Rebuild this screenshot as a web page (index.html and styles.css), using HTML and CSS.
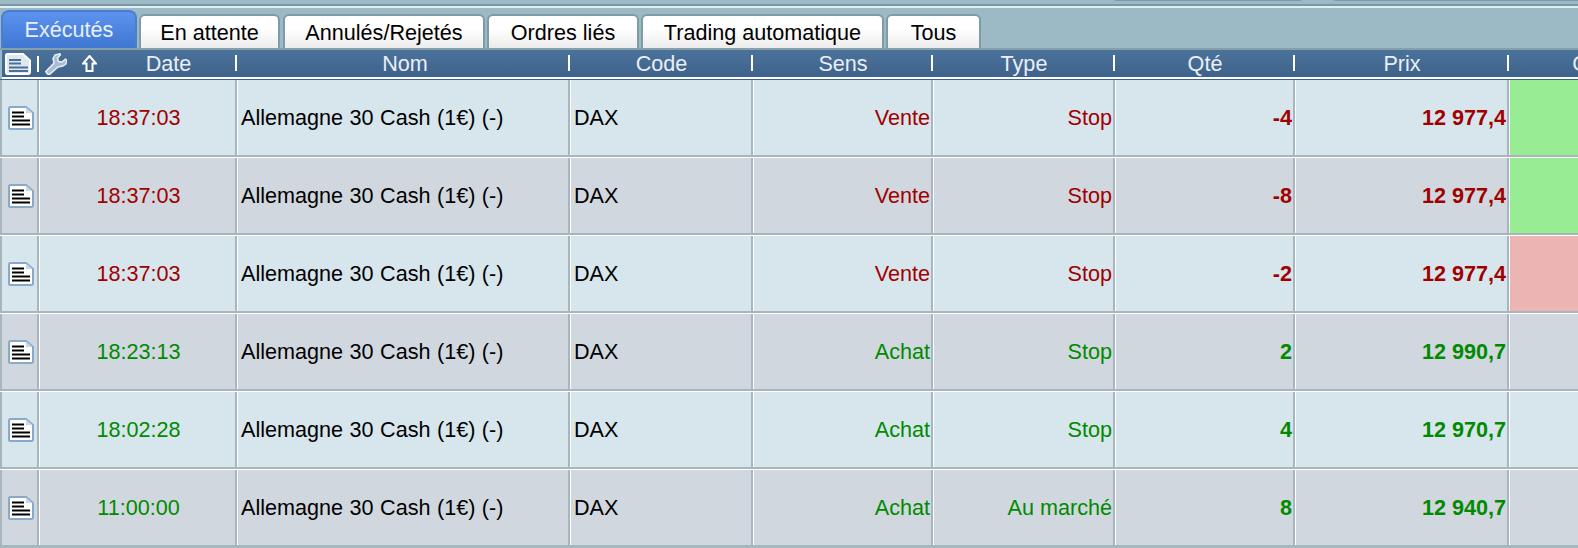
FILE: index.html
```html
<!DOCTYPE html>
<html lang="fr">
<head>
<meta charset="utf-8">
<title>Ordres</title>
<link rel="stylesheet" href="styles.css">
</head>
<body>
<div class="topstrip"><i class="edge edge-a"></i><i class="edge edge-b"></i></div>
<nav class="tabs">
  <span class="tab tab-active tab-w0">Exécutés</span>
  <span class="tab tab-w1">En attente</span>
  <span class="tab tab-w2">Annulés/Rejetés</span>
  <span class="tab tab-w3">Ordres liés</span>
  <span class="tab tab-w4">Trading automatique</span>
  <span class="tab tab-w5">Tous</span>
</nav>
<div class="thead">
  <div class="th th-icons">
    <svg class="ico-doc" width="26" height="22" viewBox="0 0 26 22"><path d="M2.500 1H18l7 6.500V19a2 2 0 0 1-2 2H2.500a1.500 1.500 0 0 1-1.500-1.500v-17A1.500 1.500 0 0 1 2.500 1z" fill="#dfe7f0" stroke="#fff" stroke-width="2"/><path d="M4 7h12M4 10.500h12M4 14.500h19M4 18h19" stroke="#4a6f99" stroke-width="2"/></svg>
    <i class="sep"></i>
    <svg class="ico-wrench" width="22" height="22" viewBox="0 0 22 22"><path d="M2.500 21 L.8 18.500 L9 10 L8 5.500 L10 2 L15 .8 L15.500 1.800 L12.500 5 L13.500 8.500 L17 9 L20.500 6 L21.500 7 L21 11 L18 13 L13 14 L4.500 21.500 Z" fill="#a9bdd2" stroke="#e8eef5" stroke-width="1.500" stroke-linejoin="round"/></svg>
    <svg class="ico-up" width="15" height="17" viewBox="0 0 15 17"><path d="M7.500 1 L14 8.500 H10.500 V16 H4.500 V8.500 H1 Z" fill="none" stroke="#fff" stroke-width="2"/></svg>
  </div>
  <div class="th c1">Date<i class="sep sep-end"></i></div>
  <div class="th c2 th-nom">Nom<i class="sep sep-end"></i></div>
  <div class="th c3">Code<i class="sep sep-end"></i></div>
  <div class="th c4">Sens<i class="sep sep-end"></i></div>
  <div class="th c5">Type<i class="sep sep-end"></i></div>
  <div class="th c6">Qté<i class="sep sep-end"></i></div>
  <div class="th c7">Prix<i class="sep sep-end"></i></div>
  <div class="th c8">Gain</div>
</div>
<div class="tbody">
  <div class="row odd sell">
    <div class="td c0"><svg class="ico-row" width="26" height="24" viewBox="0 0 26 24"><use href="#rowdoc"/></svg></div>
    <div class="td c1 center">18:37:03</div><div class="td c2 name">Allemagne 30 Cash (1€) (-)</div><div class="td c3 name">DAX</div><div class="td c4 right">Vente</div><div class="td c5 right">Stop</div><div class="td c6 right bold">-4</div><div class="td c7 right bold">12 977,4</div><div class="td c8 gain-green"></div>
  </div>
  <div class="row even sell">
    <div class="td c0"><svg class="ico-row" width="26" height="24" viewBox="0 0 26 24"><use href="#rowdoc"/></svg></div>
    <div class="td c1 center">18:37:03</div><div class="td c2 name">Allemagne 30 Cash (1€) (-)</div><div class="td c3 name">DAX</div><div class="td c4 right">Vente</div><div class="td c5 right">Stop</div><div class="td c6 right bold">-8</div><div class="td c7 right bold">12 977,4</div><div class="td c8 gain-green"></div>
  </div>
  <div class="row odd sell">
    <div class="td c0"><svg class="ico-row" width="26" height="24" viewBox="0 0 26 24"><use href="#rowdoc"/></svg></div>
    <div class="td c1 center">18:37:03</div><div class="td c2 name">Allemagne 30 Cash (1€) (-)</div><div class="td c3 name">DAX</div><div class="td c4 right">Vente</div><div class="td c5 right">Stop</div><div class="td c6 right bold">-2</div><div class="td c7 right bold">12 977,4</div><div class="td c8 gain-red"></div>
  </div>
  <div class="row even buy">
    <div class="td c0"><svg class="ico-row" width="26" height="24" viewBox="0 0 26 24"><use href="#rowdoc"/></svg></div>
    <div class="td c1 center">18:23:13</div><div class="td c2 name">Allemagne 30 Cash (1€) (-)</div><div class="td c3 name">DAX</div><div class="td c4 right">Achat</div><div class="td c5 right">Stop</div><div class="td c6 right bold">2</div><div class="td c7 right bold">12 990,7</div><div class="td c8"></div>
  </div>
  <div class="row odd buy">
    <div class="td c0"><svg class="ico-row" width="26" height="24" viewBox="0 0 26 24"><use href="#rowdoc"/></svg></div>
    <div class="td c1 center">18:02:28</div><div class="td c2 name">Allemagne 30 Cash (1€) (-)</div><div class="td c3 name">DAX</div><div class="td c4 right">Achat</div><div class="td c5 right">Stop</div><div class="td c6 right bold">4</div><div class="td c7 right bold">12 970,7</div><div class="td c8"></div>
  </div>
  <div class="row even buy">
    <div class="td c0"><svg class="ico-row" width="26" height="24" viewBox="0 0 26 24"><use href="#rowdoc"/></svg></div>
    <div class="td c1 center">11:00:00</div><div class="td c2 name">Allemagne 30 Cash (1€) (-)</div><div class="td c3 name">DAX</div><div class="td c4 right">Achat</div><div class="td c5 right">Au marché</div><div class="td c6 right bold">8</div><div class="td c7 right bold">12 940,7</div><div class="td c8"></div>
  </div>
</div>
<svg class="defs" width="0" height="0"><defs><g id="rowdoc"><path d="M2.500 1H18l7 6v14.500a1.500 1.500 0 0 1-1.500 1.500H2.500A1.500 1.500 0 0 1 1 21.500v-19A1.500 1.500 0 0 1 2.500 1z" fill="#fff" stroke="#8aa8c8" stroke-width="2"/><path d="M18 1.500V7h6.500z" fill="#c9d8ea"/><path d="M4 6.500h12M4 10.500h12M4 14.500h18M4 18.500h18" stroke="#000" stroke-width="2"/></g></defs></svg>
</body>
</html>
```

FILE: styles.css
```css
* { box-sizing: border-box; }
html, body { margin: 0; padding: 0; }
body {
  width: 1578px;
  height: 548px;
  overflow: hidden;
  background: #9bbac6;
  font-family: "Liberation Sans", Arial, sans-serif;
  font-size: 21.6px;
  color: #000;
}
.topstrip {
  display: flex;
  align-items: flex-start;
  height: 8px;
  background: linear-gradient(#9bbac6 4px, #7a97a2 4px, #7a97a2 6px, #dff0f5 6px);
}
.edge {
  display: block;
  height: 1px;
  background: #7f9aa2;
}
.edge-a { width: 186px; margin-left: 1115px; }
.edge-b { flex: 1; margin-left: 33px; }
.tabs {
  display: flex;
  align-items: flex-end;
  height: 42px;
  padding-left: 1px;
  border-bottom: 2px solid #85a0ab;
}
.tab {
  display: flex;
  align-items: center;
  justify-content: center;
  height: 34px;
  padding-top: 2px;
  border: 2px solid #7f9ba6;
  border-bottom: 0;
  border-radius: 6px 6px 0 0;
  background: linear-gradient(#ffffff 40%, #ececec);
}
.tab-active {
  height: 38px;
  color: #e8f0fc;
  background: linear-gradient(#5c93ee, #3f76d2);
  border-color: #4c7fcb;
  border-radius: 8px 8px 0 0;
  padding-top: 0;
}
.tab-w0 { width: 136px; }
.tab-w1 { width: 141px; margin-left: 2px; }
.tab-w2 { width: 202px; margin-left: 3px; }
.tab-w3 { width: 152px; margin-left: 2px; }
.tab-w4 { width: 243px; margin-left: 2px; }
.tab-w5 { width: 95px; margin-left: 2px; }
.thead {
  position: relative;
  display: flex;
  height: 29px;
  margin-left: 2px;
  overflow: hidden;
  background: linear-gradient(#4b729b, #3f628a);
  border-bottom: 2px solid #fff;
  color: #e8eff6;
}
.tbody {
  height: 469px;
  background: #a7b5bd;
  border-top: 1px solid #3f628a;
}
.th {
  position: relative;
  display: flex;
  flex: none;
  align-items: center;
  justify-content: center;
  height: 100%;
  padding-top: 1px;
}
.th-icons {
  width: 98px;
  justify-content: flex-start;
  padding: 0 0 0 3px;
}
.th-nom { padding-left: 3px; }
.sep {
  display: block;
  flex: none;
  width: 2px;
  height: 16px;
  background: #fff;
}
.sep-end {
  position: absolute;
  right: 0;
  top: 5px;
}
.th-icons .sep { margin: 0 6px; }
.ico-doc, .ico-wrench, .ico-up { flex: none; }
.ico-wrench { margin-right: 15px; }
.th.c1 { width: 137px; }
.th.c2 { width: 333px; }
.th.c3 { width: 183px; }
.th.c4 { width: 180px; }
.th.c5 { width: 182px; }
.th.c6 { width: 180px; }
.th.c7 { width: 214px; }
.th.c8 { width: 172px; }
.row {
  display: flex;
  height: 78px;
  border-bottom: 2px solid #a7b5bd;
  border-top: 1px solid #fff;
}
.row:first-child { border-top: 0; height: 77px; }
.odd { background: #d7e5ec; }
.even { background: #d1d7de; }
.sell { color: #a00000; }
.buy { color: #008a00; }
.td {
  display: flex;
  align-items: center;
  height: 100%;
  border-right: 2px solid #a7b5bd;
  border-left: 1px solid #fff;
  padding: 1px 1px 0 2px;
}
.td.c0 { width: 39px; justify-content: center; padding: 0 0 0 3px; border-left: 2px solid #a7b5bd; }
.td.c1 { width: 198px; }
.td.c2 { width: 333px; }
.td.c3 { width: 183px; }
.td.c4 { width: 180px; }
.td.c5 { width: 182px; }
.td.c6 { width: 180px; }
.td.c7 { width: 214px; }
.td.c8 { flex: 1; border-right: 0; }
.center { justify-content: center; padding: 1px 0 0 2px; }
.right { justify-content: flex-end; }
.name { color: #000; padding-left: 3px; word-spacing: 0.5px; }
.bold { font-weight: 700; }
.gain-green { background: #98ec94; }
.gain-red { background: #ecb4b2; }
.defs { position: absolute; }
```
